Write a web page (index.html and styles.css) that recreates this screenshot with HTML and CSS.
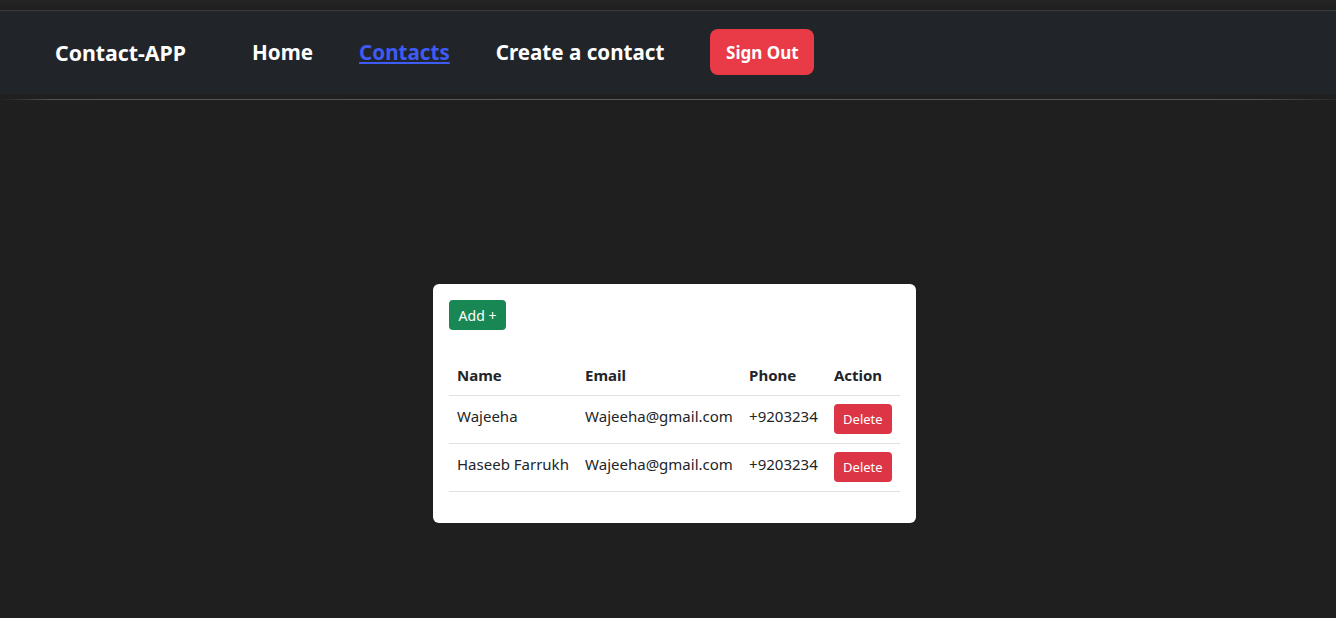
FILE: index.html
```html
<!DOCTYPE html>
<html lang="en">
<head>
<meta charset="utf-8">
<title>Contact-APP</title>
<link rel="stylesheet" href="styles.css">
</head>
<body>
<div class="page">
  <div class="topstrip"></div>
  <nav class="navbar">
    <a class="brand" href="#">Contact-APP</a>
    <ul class="nav-links">
      <li><a class="nav-link" href="#">Home</a></li>
      <li><a class="nav-link active" href="#">Contacts</a></li>
      <li><a class="nav-link" href="#">Create a contact</a></li>
      <li><button class="signout" type="button">Sign Out</button></li>
    </ul>
  </nav>
  <div class="gap"></div>
  <hr class="divider">
  <main class="content">
    <section class="card">
      <button class="btn-add" type="button">Add +</button>
      <table class="contacts">
        <thead>
          <tr><th>Name</th><th>Email</th><th>Phone</th><th>Action</th></tr>
        </thead>
        <tbody>
          <tr><td>Wajeeha</td><td>Wajeeha@gmail.com</td><td>+9203234</td><td><button class="btn-del" type="button">Delete</button></td></tr>
          <tr><td>Haseeb Farrukh</td><td>Wajeeha@gmail.com</td><td>+9203234</td><td><button class="btn-del" type="button">Delete</button></td></tr>
        </tbody>
      </table>
    </section>
  </main>
</div>
</body>
</html>
```
FILE: styles.css
```css
* { box-sizing: border-box; }
html { background: #ffffff; }
body {
  margin: 0;
  font-family: "Noto Sans", "Open Sans", sans-serif;
  color: #212529;
}
.page {
  height: 618px;
  background: #201f20;
  display: flex;
  flex-direction: column;
  overflow: hidden;
}
.topstrip {
  height: 11px;
  background: linear-gradient(#262526, #1f1e1f);
  border-bottom: 1px solid #3b3b3d;
  flex: none;
}
.navbar {
  height: 83px;
  flex: none;
  background: #212529;
  display: flex;
  align-items: center;
  padding-left: 55px;
  padding-bottom: 1px;
}
.brand {
  color: #ffffff;
  font-weight: 700;
  font-size: 21.3px;
  text-decoration: none;
  margin-right: 66px;
}
.nav-links {
  list-style: none;
  margin: 0;
  padding: 0;
  display: flex;
  align-items: center;
  gap: 46px;
}
.nav-link {
  color: #ffffff;
  font-weight: 700;
  font-size: 20.6px;
  text-decoration: none;
}
.nav-link.active {
  color: #3e5bf5;
  text-decoration: underline;
}
.signout {
  font-family: inherit;
  background: #e83a47;
  color: #ffffff;
  border: none;
  border-radius: 8px;
  font-weight: 700;
  font-size: 17px;
  width: 104px;
  height: 46px;
  padding: 0;
}
.gap { height: 5px; flex: none; }
.divider {
  margin: 0;
  border: none;
  height: 1px;
  flex: none;
  background: linear-gradient(90deg, #201f20 0%, #55545a 4%, #5a5960 50%, #55545a 94%, #2a292b 100%);
}
.content {
  flex: 1;
  display: flex;
  justify-content: center;
  padding-top: 184px;
  padding-left: 13px;
}
.card {
  background: #ffffff;
  border-radius: 6px;
  width: 483px;
  height: 239px;
  padding: 16px;
}
.btn-add {
  font-family: inherit;
  background: #198754;
  color: #ffffff;
  border: none;
  border-radius: 4px;
  font-size: 14px;
  width: 57px;
  height: 30px;
  padding: 0;
  display: block;
}
.contacts {
  margin-top: 16px;
  width: 100%;
  border-collapse: collapse;
  font-size: 15px;
  line-height: 24px;
}
.contacts th {
  text-align: left;
  font-weight: 700;
  padding: 8px;
  height: 49px;
  vertical-align: bottom;
  border-bottom: 1px solid #dee2e6;
}
.contacts td {
  padding: 8px;
  height: 48px;
  vertical-align: top;
  border-bottom: 1px solid #dee2e6;
  white-space: nowrap;
}
.btn-del {
  font-family: inherit;
  background: #dc3545;
  color: #ffffff;
  border: none;
  border-radius: 4px;
  font-size: 13px;
  width: 58px;
  height: 30px;
  padding: 0;
  display: block;
}
```
